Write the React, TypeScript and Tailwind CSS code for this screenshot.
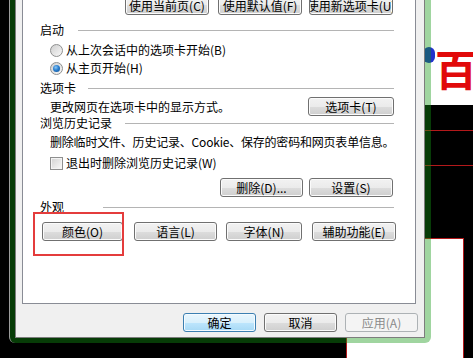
import type { ReactNode } from 'react';

type Kind = 'normal' | 'default' | 'disabled';

function Btn({ children, className = '', kind = 'normal' }: { children: ReactNode; className?: string; kind?: Kind }) {
  const skin =
    kind === 'default'
      ? 'border-[#3c7fb1] bg-[linear-gradient(to_bottom,#eaf6fd_0%,#d9f0fc_50%,#bee6fd_50%,#a7d9f5_100%)] shadow-[inset_0_0_0_1px_#f4fbff]'
      : kind === 'disabled'
        ? 'border-[#adb2b5] bg-[#f4f4f4] text-[#8a8a8a]'
        : 'border-[#707070] bg-[linear-gradient(to_bottom,#f2f2f2_0%,#ebebeb_50%,#dddddd_50%,#cfcfcf_100%)] shadow-[inset_0_0_0_1px_#fbfbfb]';
  return (
    <div
      className={`h-[19px] shrink-0 flex items-center justify-center overflow-hidden whitespace-nowrap rounded-[3px] border text-[12px] leading-none ${skin} ${className}`}
    >
      {children}
    </div>
  );
}

function GroupLabel({ label, gap }: { label: string; gap: string }) {
  return (
    <div className="h-[14px] flex items-center">
      <span className="whitespace-nowrap">{label}</span>
      <div className={`flex-1 h-px bg-[#b4b4b4] ${gap}`} />
    </div>
  );
}

function Radio({ checked }: { checked?: boolean }) {
  return (
    <span className="w-[13px] h-[13px] shrink-0 rounded-full border border-[#8e8f8f] bg-[linear-gradient(135deg,#cfcfcf,#f8f8f8)] flex items-center justify-center">
      {checked && (
        <span className="w-[7px] h-[7px] rounded-full bg-[radial-gradient(circle_at_40%_35%,#8cc8f5_0%,#2a7fcf_45%,#0b4a8c_100%)]" />
      )}
    </span>
  );
}

export default function App() {
  return (
    <div className="relative w-[473px] h-[358px] overflow-hidden bg-black text-[12px] text-black font-['Noto_Sans_CJK_SC','Liberation_Sans',sans-serif]">
      {/* desktop behind the dialog */}
      <div className="absolute left-[380px] top-0 w-[93px] h-[105px] bg-white" />
      <div className="absolute left-[423px] top-[47px] w-[12px] h-[16px] rounded-full bg-[#2233cc]" />
      <div className="absolute left-[435px] top-[47px] text-[42px] leading-none font-bold text-[#e10a0a]">百</div>
      <div className="absolute left-[380px] top-[130px] w-[93px] h-px bg-[#b3191b]" />
      <div className="absolute left-[380px] top-[165px] w-[93px] h-px bg-[#b3191b]" />
      <div className="absolute left-[346px] top-[238px] w-[118px] h-[140px] bg-white border border-[#b3191b]" />

      {/* dialog window */}
      <div className="absolute left-[9px] top-0 w-[422px] h-[343px] rounded-b-[6px] bg-[rgba(17,150,17,0.4)] border-l border-[#9c9c9c] pl-[5px] pr-[6px] pb-[5px] flex">
        <div className="flex-1 min-w-0 flex flex-col bg-[#f0f0f0] border-l border-r border-b border-[#7d7d7d]">
          {/* tab page */}
          <div className="-mt-[8px] ml-[6px] mr-[8px] h-[312px] min-w-0 bg-white border border-[#898c95] pt-[3px] pl-[17px] pr-[21px] flex flex-col">
            <div className="flex justify-end pr-[1px]">
              <Btn className="w-[84px]">使用当前页(C)</Btn>
              <Btn className="w-[84px] ml-[9px]">使用默认值(F)</Btn>
              <Btn className="w-[84px] ml-[7px]">使用新选项卡(U)</Btn>
            </div>

            <div className="mt-[8px]">
              <GroupLabel label="启动" gap="ml-[14px]" />
            </div>
            <div className="mt-[4px] h-[18px] flex items-center pl-[10px]">
              <Radio />
              <span className="ml-[3px] whitespace-nowrap">从上次会话中的选项卡开始(B)</span>
            </div>
            <div className="h-[18px] flex items-center pl-[10px]">
              <Radio checked />
              <span className="ml-[3px] whitespace-nowrap">从主页开始(H)</span>
            </div>

            <div className="mt-[4px]">
              <GroupLabel label="选项卡" gap="ml-[12px]" />
            </div>
            <div className="mt-[2px] h-[19px] flex items-center justify-between pl-[10px]">
              <span className="whitespace-nowrap">更改网页在选项卡中的显示方式。</span>
              <Btn className="w-[86px]">选项卡(T)</Btn>
            </div>

            <GroupLabel label="浏览历史记录" gap="ml-[13px]" />
            <div className="mt-[3px] h-[18px] flex items-center pl-[10px] whitespace-nowrap tracking-[-0.2px]">
              删除临时文件、历史记录、Cookie、保存的密码和网页表单信息。
            </div>
            <div className="mt-[3px] h-[18px] flex items-center pl-[10px]">
              <span className="w-[13px] h-[13px] shrink-0 border border-[#8e8f8f] bg-[linear-gradient(135deg,#d2d2d2,#fafafa)] shadow-[inset_0_0_0_1px_#f4f4f4]" />
              <span className="ml-[3px] whitespace-nowrap">退出时删除浏览历史记录(W)</span>
            </div>
            <div className="mt-[6px] flex justify-end pr-[1px]">
              <Btn className="w-[83px]">删除(D)...</Btn>
              <Btn className="w-[84px] ml-[6px]">设置(S)</Btn>
            </div>

            <div className="mt-[3px]">
              <GroupLabel label="外观" gap="ml-[39px]" />
            </div>
            <div className="mt-[8px] flex pl-[2px]">
              <Btn className="w-[81px]">颜色(O)</Btn>
              <Btn className="w-[83px] ml-[11px]">语言(L)</Btn>
              <Btn className="w-[76px] ml-[9px]">字体(N)</Btn>
              <Btn className="w-[84px] ml-[10px]">辅助功能(E)</Btn>
            </div>
          </div>

          {/* dialog buttons */}
          <div className="mt-[9px] flex justify-end pr-[6px]">
            <Btn className="w-[73px]" kind="default">确定</Btn>
            <Btn className="w-[73px] ml-[8px]">取消</Btn>
            <Btn className="w-[73px] ml-[8px]" kind="disabled">应用(A)</Btn>
          </div>
        </div>
      </div>

      {/* red highlight annotation */}
      <div className="absolute left-[33px] top-[212px] w-[91px] h-[44px] border-2 border-[#e43c3c]" />
    </div>
  );
}
